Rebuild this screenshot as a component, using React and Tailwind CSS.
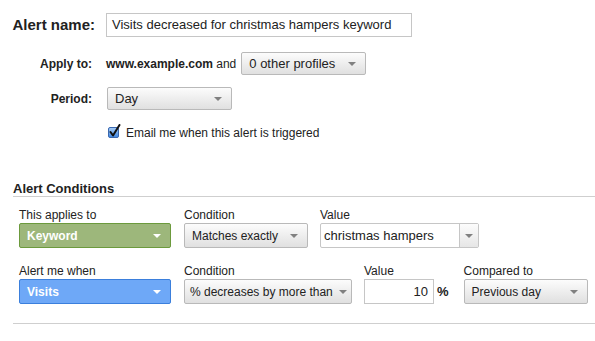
import React from "react";

const Arrow = ({ light }) => (
  <span
    className={`shrink-0 w-0 h-0 border-l-[4px] border-r-[4px] border-t-[4px] border-l-transparent border-r-transparent ${
      light ? "border-t-white" : "border-t-[#808080]"
    }`}
  />
);

const Select = ({ label, className, variant = "gray", textSize = "text-[12px]" }) => {
  const look = {
    gray: "bg-gradient-to-b from-[#fcfcfc] to-[#e0e0e0] border-[#b9b9b9] text-[#222]",
    green: "bg-[#9db77b] border-[#6c9a3d] text-white font-bold",
    blue: "bg-[#6ea8f7] border-[#3b7fdc] text-white font-bold",
  }[variant];

  return (
    <div
      className={`flex items-center justify-between gap-[2px] border rounded-[2px] ${textSize} ${look} ${className}`}
    >
      <span className="whitespace-nowrap">{label}</span>
      <Arrow light={variant !== "gray"} />
    </div>
  );
};

const CheckBox = () => (
  <svg width="14" height="15" viewBox="0 0 14 15">
    <defs>
      <linearGradient id="cb" x1="0" y1="0" x2="0" y2="1">
        <stop offset="0" stopColor="#a8cdf5" />
        <stop offset="1" stopColor="#3f86e0" />
      </linearGradient>
    </defs>
    <rect x="0.5" y="3.5" width="10" height="10" rx="1.5" fill="url(#cb)" stroke="#3a68b0" />
    <path d="M2.5 8 L5 11.5 L11.5 1" fill="none" stroke="#111" strokeWidth="2" strokeLinecap="round" strokeLinejoin="round" />
  </svg>
);

export default function App() {
  return (
    <div className="w-[595px] h-[341px] bg-white text-[#222] font-['Liberation_Sans',Arial,sans-serif] pt-[13px] overflow-hidden">
      {/* Alert name */}
      <div className="flex items-center">
        <div className="w-[95px] text-right text-[15px] font-bold">Alert name:</div>
        <div className="ml-[11px] w-[306px] h-[24px] border border-[#c6c6c6] flex items-center px-[5px] text-[13px]">
          Visits decreased for christmas hampers keyword
        </div>
      </div>

      {/* Apply to */}
      <div className="flex items-center mt-[15px] h-[23px]">
        <div className="w-[92px] text-right text-[12px] font-bold">Apply to:</div>
        <div className="ml-[14px] text-[12px] whitespace-nowrap">
          <span className="font-bold">www.example.com</span> and
        </div>
        <Select label="0 other profiles" className="ml-[5px] w-[125px] h-[23px] pl-[7px] pr-[9px]" textSize="text-[13px]" />
      </div>

      {/* Period */}
      <div className="flex items-center mt-[12px] h-[23px]">
        <div className="w-[92px] text-right text-[12px] font-bold">Period:</div>
        <Select label="Day" className="ml-[15px] w-[125px] h-[23px] pl-[7px] pr-[9px]" textSize="text-[13px]" />
      </div>

      {/* Email checkbox */}
      <div className="flex items-center mt-[11px] ml-[108px]">
        <CheckBox />
        <span className="ml-[4px] text-[12px] mt-[3px]">Email me when this alert is triggered</span>
      </div>

      {/* Alert Conditions */}
      <div className="mt-[39px] ml-[13px] border-b border-[#cfcfcf] text-[13px] font-bold leading-[15px]">
        Alert Conditions
      </div>

      <div className="ml-[19px] mt-[11px] text-[12px]">
        {/* Row 1 */}
        <div className="flex">
          <div className="w-[152px]">
            <div className="leading-[14px] mb-[1px]">This applies to</div>
            <Select label="Keyword" variant="green" className="h-[25px] pl-[7px] pr-[9px]" />
          </div>
          <div className="ml-[13px] w-[124px]">
            <div className="leading-[14px] mb-[1px]">Condition</div>
            <Select label="Matches exactly" className="h-[25px] pl-[7px] pr-[9px]" />
          </div>
          <div className="ml-[12px] w-[159px]">
            <div className="leading-[14px] mb-[1px]">Value</div>
            <div className="flex h-[25px] border border-[#c6c6c6] rounded-[2px] text-[13px]">
              <div className="flex-1 flex items-center px-[3px]">christmas hampers</div>
              <div className="w-[19px] border-l border-[#c6c6c6] bg-gradient-to-b from-[#fcfcfc] to-[#e6e6e6] flex items-center justify-center">
                <Arrow />
              </div>
            </div>
          </div>
        </div>

        {/* Row 2 */}
        <div className="flex mt-[16px]">
          <div className="w-[152px]">
            <div className="leading-[14px] mb-[1px]">Alert me when</div>
            <Select label="Visits" variant="blue" className="h-[25px] pl-[7px] pr-[9px]" />
          </div>
          <div className="ml-[13px] w-[168px]">
            <div className="leading-[14px] mb-[1px]">Condition</div>
            <Select label="% decreases by more than" className="h-[25px] pl-[5px] pr-[4px]" />
          </div>
          <div className="ml-[12px]">
            <div className="leading-[14px] mb-[1px]">Value</div>
            <div className="flex items-center">
              <div className="w-[70px] h-[25px] border border-[#c6c6c6] flex items-center justify-end pr-[5px] text-[13px]">
                10
              </div>
              <span className="ml-[3px] text-[13px] font-bold">%</span>
            </div>
          </div>
          <div className="ml-[15px] w-[124px]">
            <div className="leading-[14px] mb-[1px]">Compared to</div>
            <Select label="Previous day" className="h-[25px] pl-[7px] pr-[9px]" />
          </div>
        </div>
      </div>

      <div className="mt-[19px] ml-[13px] border-b border-[#cfcfcf]" />
    </div>
  );
}
